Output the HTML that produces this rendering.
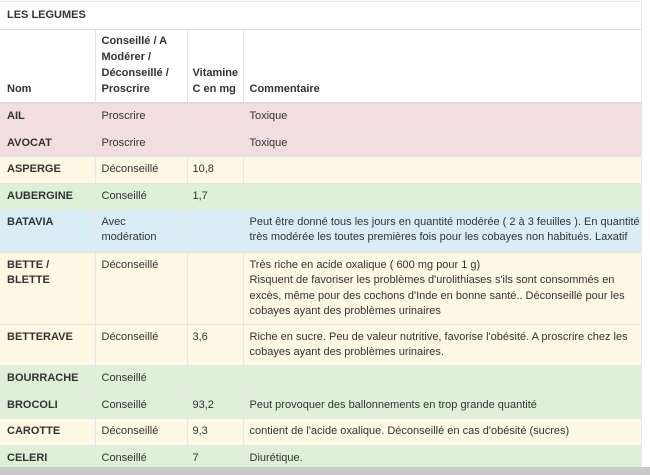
<!DOCTYPE html>
<html><head><meta charset="utf-8"><style>
html,body{margin:0;padding:0;background:#fff;width:650px;height:475px;overflow:hidden}
body{font-family:"Liberation Sans",Arial,sans-serif;font-size:11px;color:#333;line-height:16px}
.wrap{position:absolute;left:0;top:0;width:650px;height:475px;overflow:hidden}
.panel{position:absolute;left:0;top:1px;width:641px;border:1px solid #e8e8e8;border-left:none}
.title{height:27px;line-height:27px;padding-left:7px;font-weight:bold;border-bottom:1px solid #ddd}
table{border-collapse:collapse;width:641px;table-layout:fixed}
td,th{padding:4px 6px 3px 6px;vertical-align:top;text-align:left;border-top:1px solid #e6e6e6}
td{line-height:15.5px;padding-top:5px}
th{vertical-align:bottom;border-bottom:2px solid #ddd;border-top:none;padding-bottom:5px;padding-top:3px}
td+td,th+th{border-left:1px solid #e6e6e6}
td:nth-child(3),th:nth-child(3){padding-left:5px;padding-right:2px}
td:first-child,th:first-child{padding-left:7px}
td:nth-child(4){white-space:nowrap;overflow:hidden;padding-right:0}
td:first-child{font-weight:bold}
.d td{background:#f2dede}.w td{background:#fcf8e3}.s td{background:#dff0d8}.i td{background:#d9edf7}
.bar{position:absolute;left:0;top:467px;width:650px;height:8px;background:#c9c9c9;z-index:5}
</style></head><body><div class="wrap">
<div class="panel">
<div class="title">LES LEGUMES</div>
<table>
<colgroup><col style="width:95px"><col style="width:92px"><col style="width:56px"><col></colgroup>
<tr style="height:68px"><th>Nom</th><th>Conseillé / A Modérer / Déconseillé / Proscrire</th><th>Vitamine C en mg</th><th>Commentaire</th></tr>
<tr class="d" style="height:27px"><td>AIL</td><td>Proscrire</td><td></td><td>Toxique</td></tr>
<tr class="d" style="height:26px"><td>AVOCAT</td><td>Proscrire</td><td></td><td>Toxique</td></tr>
<tr class="w" style="height:27px"><td>ASPERGE</td><td>Déconseillé</td><td>10,8</td><td></td></tr>
<tr class="s" style="height:26px"><td>AUBERGINE</td><td>Conseillé</td><td>1,7</td><td></td></tr>
<tr class="i" style="height:43px"><td>BATAVIA</td><td>Avec<br>modération</td><td></td><td>Peut être donné tous les jours en quantité modérée ( 2 à 3 feuilles ). En quantité<br>très modérée les toutes premières fois pour les cobayes non habitués. Laxatif</td></tr>
<tr class="w" style="height:72px"><td>BETTE /<br>BLETTE</td><td>Déconseillé</td><td></td><td>Très riche en acide oxalique ( 600 mg pour 1 g)<br>Risquent de favoriser les problèmes d'urolithiases s'ils sont consommés en<br>excès, même pour des cochons d'Inde en bonne santé.. Déconseillé pour les<br>cobayes ayant des problèmes urinaires</td></tr>
<tr class="w" style="height:41px"><td>BETTERAVE</td><td>Déconseillé</td><td>3,6</td><td>Riche en sucre. Peu de valeur nutritive, favorise l'obésité. A proscrire chez les<br>cobayes ayant des problèmes urinaires.</td></tr>
<tr class="s" style="height:27px"><td>BOURRACHE</td><td>Conseillé</td><td></td><td></td></tr>
<tr class="s" style="height:26px"><td>BROCOLI</td><td>Conseillé</td><td>93,2</td><td>Peut provoquer des ballonnements en trop grande quantité</td></tr>
<tr class="w" style="height:27px"><td>CAROTTE</td><td>Déconseillé</td><td>9,3</td><td>contient de l'acide oxalique. Déconseillé en cas d'obésité (sucres)</td></tr>
<tr class="s" style="height:41px"><td>CELERI<br>BRANCHE</td><td>Conseillé</td><td>7</td><td>Diurétique.<br>Peut provoquer des selles molles chez certains cobayes sensibles</td></tr>
</table>
</div>
<div class="bar"></div>
</div></body></html>
